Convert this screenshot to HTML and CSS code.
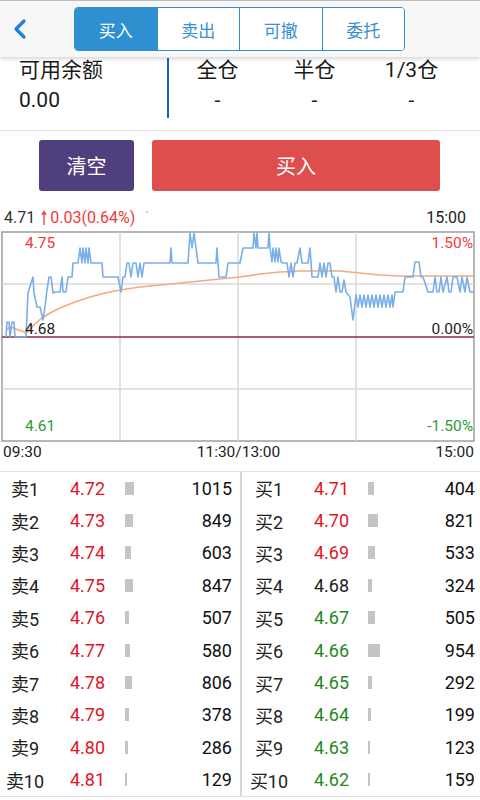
FILE: index.html
```html
<!DOCTYPE html>
<html lang="zh">
<head>
<meta charset="utf-8">
<link rel="stylesheet" href="styles.css">
</head>
<body>
<div class="topbar">
  <div class="back">
    <svg width="16" height="22" viewBox="0 0 16 22"><path d="M12 3 L4 11 L12 19" stroke="#1a7fe0" stroke-width="3.2" fill="none" stroke-linecap="round" stroke-linejoin="round"/></svg>
  </div>
  <div class="seg">
    <span class="on">买入</span><span>卖出</span><span>可撤</span><span>委托</span>
  </div>
</div>

<div class="info">
  <div class="balance">
    <div class="lbl">可用余额</div>
    <div class="val">0.00</div>
  </div>
  <div class="vdiv"></div>
  <div class="pos">
    <div class="col"><div class="lbl">全仓</div><div class="val">-</div></div>
    <div class="col"><div class="lbl">半仓</div><div class="val">-</div></div>
    <div class="col"><div class="lbl">1/3仓</div><div class="val">-</div></div>
  </div>
</div>

<div class="actions">
  <div class="btn clear">清空</div>
  <div class="btn buy">买入</div>
</div>

<div class="quote">
  <div class="q-left">
    <span class="last">4.71</span>
    <svg class="arrow" width="6" height="16" viewBox="0 0 6 16"><path d="M3 15 L3 2 M0.8 5 L3 1.5 L5.2 5" stroke="#f03a3a" stroke-width="1.3" fill="none"/></svg>
    <span class="chg">0.03(0.64%)</span>
    <span class="dot"></span>
  </div>
  <span class="time">15:00</span>
</div>

<div class="chart">
  <svg width="476" height="211" viewBox="1 231 476 211">
    <rect x="2" y="232" width="472" height="209" fill="#fff" stroke="#9e9e9e" stroke-width="1.5"/>
    <g stroke="#d9d9d9" stroke-width="1.5">
      <line x1="120" y1="232" x2="120" y2="441"/>
      <line x1="238" y1="232" x2="238" y2="441"/>
      <line x1="356" y1="232" x2="356" y2="441"/>
      <line x1="2" y1="284" x2="474" y2="284"/>
      <line x1="2" y1="389" x2="474" y2="389"/>
    </g>
    <line x1="2" y1="337" x2="474" y2="337" stroke="#8e2a40" stroke-width="1.5"/>
    <polyline fill="none" stroke="#f0ab80" stroke-width="1.6" points="7,329 10,327 14,328 18,330 22,331 26,333 30,329 36,323 42,318 50,313 60,308 75,302 90,297 105,293 120,290 140,287 160,285 180,283 200,281 220,279 240,277 260,274 280,272 300,271 320,271 340,271 360,273 380,275 400,276 440,276 474,276"/>
    <polyline fill="none" stroke="#7aaee8" stroke-width="1.6" stroke-linejoin="round" points="6,337 7,322 9,322 10,337 12,322 14,322 15,337 26,337 28,293 31,283 33,277 34,293 37,307 40,307 43,320 45,307 47,290 49,277 51,277 53,293 55,292 60,292 62,277 63,292 66,292 68,277 72,277 73,263 78,263 80,248 82,263 83,248 85,263 86,248 88,263 89,248 91,263 102,263 103,277 118,277 121,292 123,277 125,277 127,263 129,263 131,277 133,263 136,263 138,277 140,263 142,277 144,263 170,263 171,248 172,263 188,263 190,233 192,248 194,233 196,248 198,263 216,263 217,248 219,277 226,277 228,263 240,263 243,248 253,248 254,233 256,248 257,233 258,248 268,248 269,233 270,248 272,262 273,248 275,262 276,248 278,262 279,248 281,262 283,263 287,263 289,277 291,263 293,277 295,263 297,263 300,248 302,263 308,263 310,248 312,277 318,277 320,263 322,277 324,263 326,277 328,263 330,263 332,277 334,277 336,292 338,277 340,292 342,292 344,280 346,292 350,297 353,320 356,295 358,307 360,295 362,307 364,295 366,307 368,295 370,307 372,295 374,307 376,295 378,307 380,295 382,307 384,295 386,307 388,295 390,307 392,295 393,307 395,292 403,292 405,277 413,277 415,262 419,262 421,277 423,277 428,292 433,292 435,277 437,292 439,292 441,277 443,292 447,277 449,292 451,292 453,277 457,277 460,292 462,277 465,292 467,277 470,292 474,292"/>
  </svg>
  <span class="cl l-top red">4.75</span>
  <span class="cl l-mid">4.68</span>
  <span class="cl l-bot green">4.61</span>
  <span class="cr r-top red">1.50%</span>
  <span class="cr r-mid">0.00%</span>
  <span class="cr r-bot green">-1.50%</span>
</div>

<div class="axis">
  <span>09:30</span><span>11:30/13:00</span><span>15:00</span>
</div>

<div class="book">
  <div class="half sell">
    <div class="row"><span class="nm">卖1</span><span class="pr up">4.72</span><span class="bar"><i style="width:9px"></i></span><span class="qty">1015</span></div>
    <div class="row"><span class="nm">卖2</span><span class="pr up">4.73</span><span class="bar"><i style="width:8px"></i></span><span class="qty">849</span></div>
    <div class="row"><span class="nm">卖3</span><span class="pr up">4.74</span><span class="bar"><i style="width:6px"></i></span><span class="qty">603</span></div>
    <div class="row"><span class="nm">卖4</span><span class="pr up">4.75</span><span class="bar"><i style="width:8px"></i></span><span class="qty">847</span></div>
    <div class="row"><span class="nm">卖5</span><span class="pr up">4.76</span><span class="bar"><i style="width:4px"></i></span><span class="qty">507</span></div>
    <div class="row"><span class="nm">卖6</span><span class="pr up">4.77</span><span class="bar"><i style="width:5px"></i></span><span class="qty">580</span></div>
    <div class="row"><span class="nm">卖7</span><span class="pr up">4.78</span><span class="bar"><i style="width:7px"></i></span><span class="qty">806</span></div>
    <div class="row"><span class="nm">卖8</span><span class="pr up">4.79</span><span class="bar"><i style="width:4px"></i></span><span class="qty">378</span></div>
    <div class="row"><span class="nm">卖9</span><span class="pr up">4.80</span><span class="bar"><i style="width:3px"></i></span><span class="qty">286</span></div>
    <div class="row"><span class="nm">卖10</span><span class="pr up">4.81</span><span class="bar"><i style="width:2px"></i></span><span class="qty">129</span></div>
  </div>
  <div class="divider"></div>
  <div class="half bid">
    <div class="row"><span class="nm">买1</span><span class="pr up">4.71</span><span class="bar"><i style="width:6px"></i></span><span class="qty">404</span></div>
    <div class="row"><span class="nm">买2</span><span class="pr up">4.70</span><span class="bar"><i style="width:10px"></i></span><span class="qty">821</span></div>
    <div class="row"><span class="nm">买3</span><span class="pr up">4.69</span><span class="bar"><i style="width:7px"></i></span><span class="qty">533</span></div>
    <div class="row"><span class="nm">买4</span><span class="pr">4.68</span><span class="bar"><i style="width:4px"></i></span><span class="qty">324</span></div>
    <div class="row"><span class="nm">买5</span><span class="pr down">4.67</span><span class="bar"><i style="width:7px"></i></span><span class="qty">505</span></div>
    <div class="row"><span class="nm">买6</span><span class="pr down">4.66</span><span class="bar"><i style="width:12px"></i></span><span class="qty">954</span></div>
    <div class="row"><span class="nm">买7</span><span class="pr down">4.65</span><span class="bar"><i style="width:4px"></i></span><span class="qty">292</span></div>
    <div class="row"><span class="nm">买8</span><span class="pr down">4.64</span><span class="bar"><i style="width:3px"></i></span><span class="qty">199</span></div>
    <div class="row"><span class="nm">买9</span><span class="pr down">4.63</span><span class="bar"><i style="width:2px"></i></span><span class="qty">123</span></div>
    <div class="row"><span class="nm">买10</span><span class="pr down">4.62</span><span class="bar"><i style="width:2px"></i></span><span class="qty">159</span></div>
  </div>
</div>
</body>
</html>
```

FILE: styles.css
```css
html, body {
  margin: 0;
  padding: 0;
  background: #fff;
}
body {
  width: 480px;
  height: 800px;
  overflow: hidden;
  font-family: Roboto, "Noto Sans CJK SC", sans-serif;
  color: #1a1a1a;
}

/* top bar */
.topbar {
  position: relative;
  z-index: 2;
  height: 57px;
  box-sizing: border-box;
  border-top: 1px solid #bdbdbd;
  background: #f7f7f7;
  box-shadow: 0 2px 4px rgba(0, 0, 0, 0.16);
  display: flex;
  align-items: center;
}
.back {
  width: 74px;
  padding-left: 12px;
  box-sizing: border-box;
  display: flex;
  align-items: center;
}
.seg {
  display: flex;
  width: 331px;
  height: 44px;
  box-sizing: border-box;
  border: 1.5px solid #2f8fd0;
  border-radius: 4px;
  overflow: hidden;
}
.seg span {
  flex: 1;
  display: flex;
  align-items: center;
  justify-content: center;
  font-size: 17px;
  color: #3a8fd0;
  background: #fff;
  border-left: 1.5px solid #2f8fd0;
}
.seg span:first-child {
  border-left: 0;
}
.seg .on {
  background: #2f8fcf;
  color: #fff;
}

/* info */
.info {
  display: flex;
  height: 74px;
  box-sizing: border-box;
  border-bottom: 1px solid #e3e3e3;
  font-size: 21px;
}
.info .lbl {
  line-height: 26px;
}
.info .val {
  margin-top: 4px;
  line-height: 26px;
}
.balance {
  width: 167px;
  padding-left: 19px;
  box-sizing: border-box;
}
.vdiv {
  width: 2px;
  height: 60px;
  margin-top: 1px;
  background: #1565c0;
}
.pos {
  width: 291px;
  display: grid;
  grid-template-columns: repeat(3, 1fr);
}
.col {
  text-align: center;
}

/* action buttons */
.actions {
  display: flex;
  gap: 18px;
  padding: 9px 0 0 39px;
}
.btn {
  height: 51px;
  border-radius: 3px;
  color: #fff;
  font-size: 20px;
  display: flex;
  align-items: center;
  justify-content: center;
}
.clear {
  width: 95px;
  background: #4f3f7e;
}
.buy {
  width: 288px;
  background: #dc4f4c;
}

/* quote line */
.quote {
  margin-top: 17px;
  height: 20px;
  line-height: 20px;
  display: flex;
  justify-content: space-between;
  padding: 0 14px 0 4px;
  font-size: 16px;
}
.q-left {
  display: flex;
  align-items: center;
}
.last {
  color: #333;
}
.arrow {
  margin: 0 3px 0 6px;
}
.chg {
  color: #f03a3a;
}
.dot {
  width: 2px;
  height: 2px;
  margin: 0 0 12px 11px;
  border-radius: 1px;
  background: #f3a0a0;
}
.time {
  color: #222;
}

/* chart */
.chart {
  position: relative;
  margin: 3px 0 0 1px;
  width: 476px;
  height: 211px;
}
.chart svg {
  display: block;
}
.cl, .cr {
  position: absolute;
  font-size: 15.5px;
  line-height: 18px;
  color: #222;
}
.cl {
  left: 24px;
}
.cr {
  right: 4px;
}
.l-top, .r-top { top: 3px; }
.l-mid, .r-mid { top: 89px; }
.l-bot, .r-bot { top: 186px; }
.red { color: #f23b3b; }
.green { color: #2f9a2f; }

.axis {
  height: 20px;
  line-height: 20px;
  display: flex;
  justify-content: space-between;
  padding: 0 6px 0 3px;
  font-size: 15.5px;
  color: #222;
}

/* order book */
.book {
  margin-top: 9px;
  display: flex;
  border-top: 1px solid #e0e0e0;
  border-bottom: 1px solid #e0e0e0;
  font-size: 18px;
}
.half {
  display: flex;
  flex-direction: column;
}
.sell {
  width: 240px;
}
.bid {
  width: 238px;
}
.divider {
  width: 2px;
  background: #d6d6d6;
}
.row {
  height: 32.4px;
  display: grid;
  align-items: center;
}
.sell .row {
  grid-template-columns: 50px 75px 1fr auto;
  padding-right: 8px;
}
.bid .row {
  grid-template-columns: 54px 72px 1fr auto;
  padding-right: 5px;
}
.nm {
  text-align: center;
  color: #222;
}
.sell .pr {
  padding-left: 20px;
}
.bid .pr {
  padding-left: 18px;
}
.pr {
  color: #222;
}
.pr.up {
  color: #e2141e;
}
.pr.down {
  color: #1e8a1e;
}
.bar {
  display: flex;
  align-items: center;
}
.bar i {
  display: block;
  height: 13px;
  background: #c4c4c4;
}
.qty {
  text-align: right;
  color: #111;
}
```
